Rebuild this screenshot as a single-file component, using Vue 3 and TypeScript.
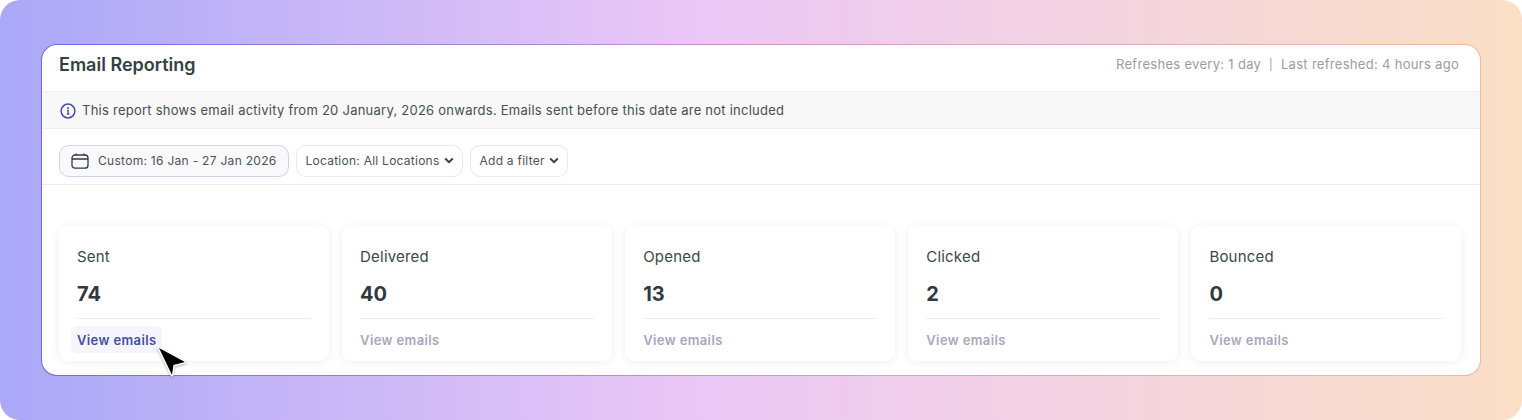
<script setup lang="ts">
interface Stat { label: string; value: number; active?: boolean }
const stats: Stat[] = [
  { label: 'Sent', value: 74, active: true },
  { label: 'Delivered', value: 40 },
  { label: 'Opened', value: 13 },
  { label: 'Clicked', value: 2 },
  { label: 'Bounced', value: 0 },
]
</script>

<template>
  <div class="page">
    <section class="panel">
      <header class="head">
        <h1>Email Reporting</h1>
        <div class="meta">Refreshes every: 1 day&nbsp;&nbsp;<span class="pipe">|</span>&nbsp;&nbsp;Last refreshed: 4 hours ago</div>
      </header>
      <div class="notice">
        <svg class="info" width="16" height="16" viewBox="0 0 16 16" fill="none">
          <circle cx="8" cy="8" r="6.9" stroke="#4a4fa3" stroke-width="1.5" />
          <circle cx="8" cy="5" r="1" fill="#4a4fa3" />
          <path d="M6.9 7.4H8.2V11M6.9 11H9.4" stroke="#4a4fa3" stroke-width="1.3" />
        </svg>
        <span>This report shows email activity from 20 January, 2026 onwards. Emails sent before this date are not included</span>
      </div>
      <div class="filters">
        <button class="chip date">
          <svg width="18" height="16" viewBox="0 0 18 16" fill="none">
            <rect x="1" y="2" width="16" height="13.2" rx="3" stroke="#2f3b40" stroke-width="1.3" />
            <path d="M1 6H17M5 0.6V2.6M13 0.6V2.6" stroke="#2f3b40" stroke-width="1.3" />
          </svg>
          Custom: 16 Jan - 27 Jan 2026
        </button>
        <button class="chip">
          Location: All Locations
          <svg width="10" height="7" viewBox="0 0 10 7" fill="none"><path d="M1.2 1.5L5 5.2L8.8 1.5" stroke="#343f44" stroke-width="1.9" /></svg>
        </button>
        <button class="chip">
          Add a filter
          <svg width="10" height="7" viewBox="0 0 10 7" fill="none"><path d="M1.2 1.5L5 5.2L8.8 1.5" stroke="#343f44" stroke-width="1.9" /></svg>
        </button>
      </div>
      <div class="cards">
        <article v-for="s in stats" :key="s.label" class="card">
          <div class="label">{{ s.label }}</div>
          <div class="value">{{ s.value }}</div>
          <div class="foot">
            <a class="link" :class="{ active: s.active }">View emails</a>
          </div>
        </article>
      </div>
      <svg class="cursor" width="34" height="38" viewBox="0 0 34 38">
        <path d="M4 4L17 31L18.5 21L30 18Z" fill="#000" stroke="#fff" stroke-width="3" stroke-linejoin="round" paint-order="stroke" />
      </svg>
    </section>
  </div>
</template>

<style>
html, body { margin: 0; background: #fff; }
</style>

<style scoped>
.page {
  width: 1522px;
  height: 420px;
  box-sizing: border-box;
  padding: 44px 41px 44px 41px;
  border-radius: 20px;
  background: linear-gradient(90deg, #aaa8f8 0%, #ecc8f6 47%, #fbdfc6 100%);
  font-family: Inter, "Liberation Sans", sans-serif;
  color: #2f3b40;
}
.panel {
  position: relative;
  height: 332px;
  box-sizing: border-box;
  border: 1px solid transparent;
  border-radius: 16px;
  background: linear-gradient(#fff, #fff) padding-box, linear-gradient(90deg, #6d6ae8, #dd9fc0 60%, #f6b79e) border-box;
}
.head {
  height: 46px;
  box-sizing: border-box;
  display: flex;
  align-items: center;
  justify-content: space-between;
  padding: 0 21px 6px 17px;
}
h1 { margin: 0; font-size: 18px; line-height: 24px; font-weight: 600; color: #343f44; }
.meta { font-size: 13px; color: #9c9c9e; letter-spacing: 0.3px; margin-top: -2px; }
.pipe { font-size: 11px; }
.notice {
  height: 38px;
  box-sizing: border-box;
  display: flex;
  align-items: center;
  gap: 6px;
  padding: 0 18px;
  background: #f8f8f8;
  border-top: 1px solid #efefef;
  border-bottom: 1px solid #efefef;
  font-size: 13px;
  color: #454f54;
  letter-spacing: 0.245px;
}
.info { flex: none; margin-top: 1px; }
.filters {
  height: 56px;
  box-sizing: border-box;
  display: flex;
  align-items: center;
  gap: 7px;
  padding: 8px 17px 0;
  border-bottom: 1px solid #ececf0;
}
.chip {
  height: 32px;
  box-sizing: border-box;
  display: flex;
  align-items: center;
  gap: 4px;
  padding: 0 8px 0 9px;
  background: #fff;
  border: 1px solid #e8e9ef;
  border-radius: 10px;
  font: 400 12px Inter, "Liberation Sans", sans-serif;
  letter-spacing: 0.25px;
  color: #4a5358;
}
.chip.date {
  gap: 9px;
  padding: 0 11px 0 11px;
  background: #f9f9fc;
  border-color: #ced3ee;
  letter-spacing: 0.29px;
}
.cards {
  display: grid;
  grid-template-columns: repeat(5, 270px);
  gap: 13.1px;
  padding: 41px 18px 0 17px;
}
.card {
  height: 135px;
  box-sizing: border-box;
  padding: 20px 18px 0;
  background: #fff;
  border-radius: 9px;
  box-shadow: 0 1px 10px rgba(30, 30, 60, 0.07);
}
.label { font-size: 15px; line-height: 22px; color: #3c474b; letter-spacing: 0.2px; }
.value { margin-top: 14px; font-size: 20px; line-height: 24px; font-weight: 700; color: #2f3b40; }
.foot {
  margin-top: 12px;
  padding-top: 7px;
  border-top: 1px solid #ececee;
}
.link {
  display: inline-block;
  font-size: 13px;
  line-height: 26px;
  padding-top: 1px;
  font-weight: 600;
  letter-spacing: 0.38px;
  color: #a8a8ba;
}
.link.active {
  color: #474ea0;
  background: #f5f5fe;
  border-radius: 6px;
  margin-left: -6px;
  padding: 1px 5px 0 6px;
}
.cursor { position: absolute; left: 113px; top: 299px; filter: drop-shadow(0 1px 1px rgba(0,0,0,.3)); }
</style>
